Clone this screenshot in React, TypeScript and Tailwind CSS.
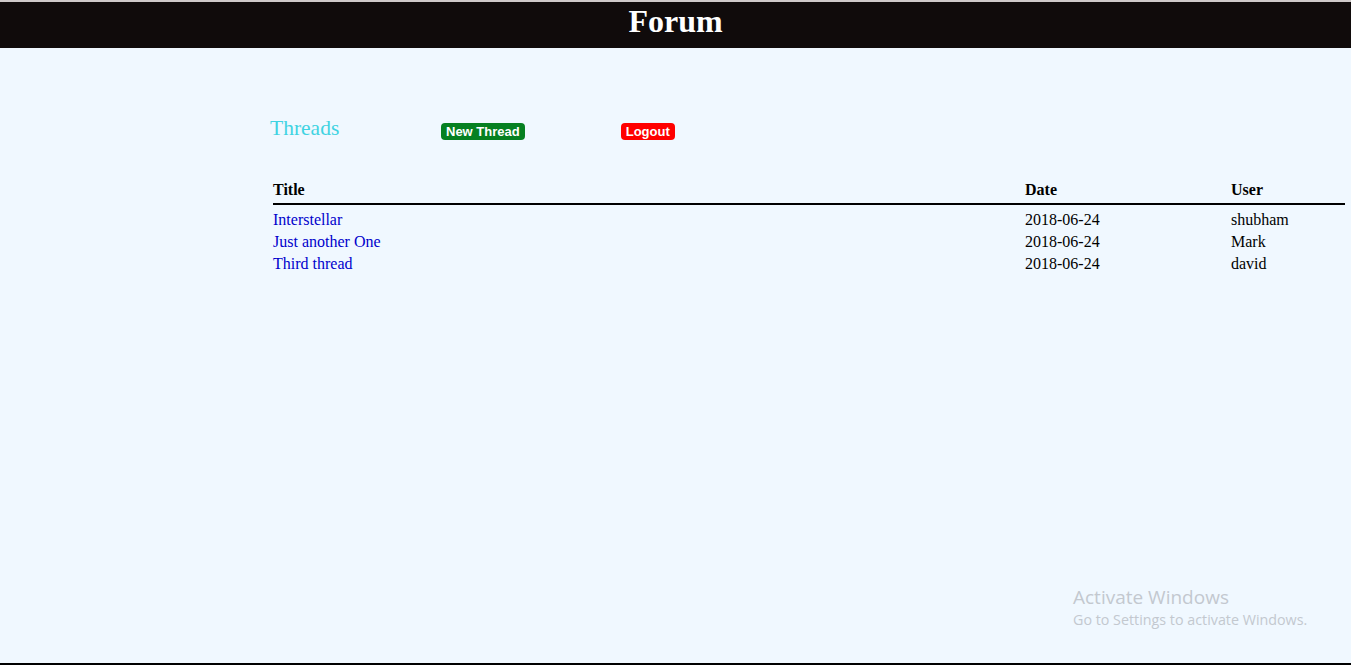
const THREADS = [
  { title: "Interstellar", date: "2018-06-24", user: "shubham" },
  { title: "Just another One", date: "2018-06-24", user: "Mark" },
  { title: "Third thread", date: "2018-06-24", user: "david" },
];

export default function App() {
  return (
    <div className="relative h-[665px] overflow-hidden bg-[#f0f8ff] font-['Liberation_Serif',serif] border-b-2 border-black">
      {/* Header */}
      <div className="border-t-2 border-[#cfc9c9] bg-[#100b0b] h-[48px] flex justify-center">
        <h1 className="text-[32px] font-bold text-white leading-none pt-[3px]">Forum</h1>
      </div>

      <div className="pl-[270px] pr-[6px] pt-[68px]">
        {/* Toolbar */}
        <div className="flex items-center h-[26px]">
          <span className="w-[171px] text-[21.5px] text-[#3fd3e2] leading-none">Threads</span>
          <button className="mt-[4px] h-[17px] px-[5px] rounded-[4px] bg-[#068021] text-white text-[13px] font-bold font-['Liberation_Sans',sans-serif] leading-none">
            New Thread
          </button>
          <button className="mt-[4px] ml-[96px] h-[17px] px-[5px] rounded-[4px] bg-[#ff0000] text-white text-[13px] font-bold font-['Liberation_Sans',sans-serif] leading-none">
            Logout
          </button>
        </div>

        {/* Threads table */}
        <table className="mt-[39px] ml-[3px] w-[1072px] border-collapse text-[16px] text-black">
          <thead>
            <tr className="border-b-2 border-black">
              <th className="text-left font-bold pb-[4px] leading-[18px]">Title</th>
              <th className="text-left font-bold w-[206px] pb-[4px] leading-[18px]">Date</th>
              <th className="text-left font-bold w-[114px] pb-[4px] leading-[18px]">User</th>
            </tr>
          </thead>
          <tbody className="leading-[22px]">
            {THREADS.map((t, i) => (
              <tr key={t.title}>
                <td className={i === 0 ? "pt-[4px]" : ""}>
                  <a href="#" className="text-[#0000cc]">{t.title}</a>
                </td>
                <td className={i === 0 ? "pt-[4px]" : ""}>{t.date}</td>
                <td className={i === 0 ? "pt-[4px]" : ""}>{t.user}</td>
              </tr>
            ))}
          </tbody>
        </table>
      </div>

      {/* OS watermark */}
      <div className="absolute left-[1073px] top-[586px] font-['Open_Sans',sans-serif] text-[#c3c8cf] leading-tight">
        <div className="text-[19px]">Activate Windows</div>
        <div className="text-[14.3px] mt-[1px]">Go to Settings to activate Windows.</div>
      </div>
    </div>
  );
}
